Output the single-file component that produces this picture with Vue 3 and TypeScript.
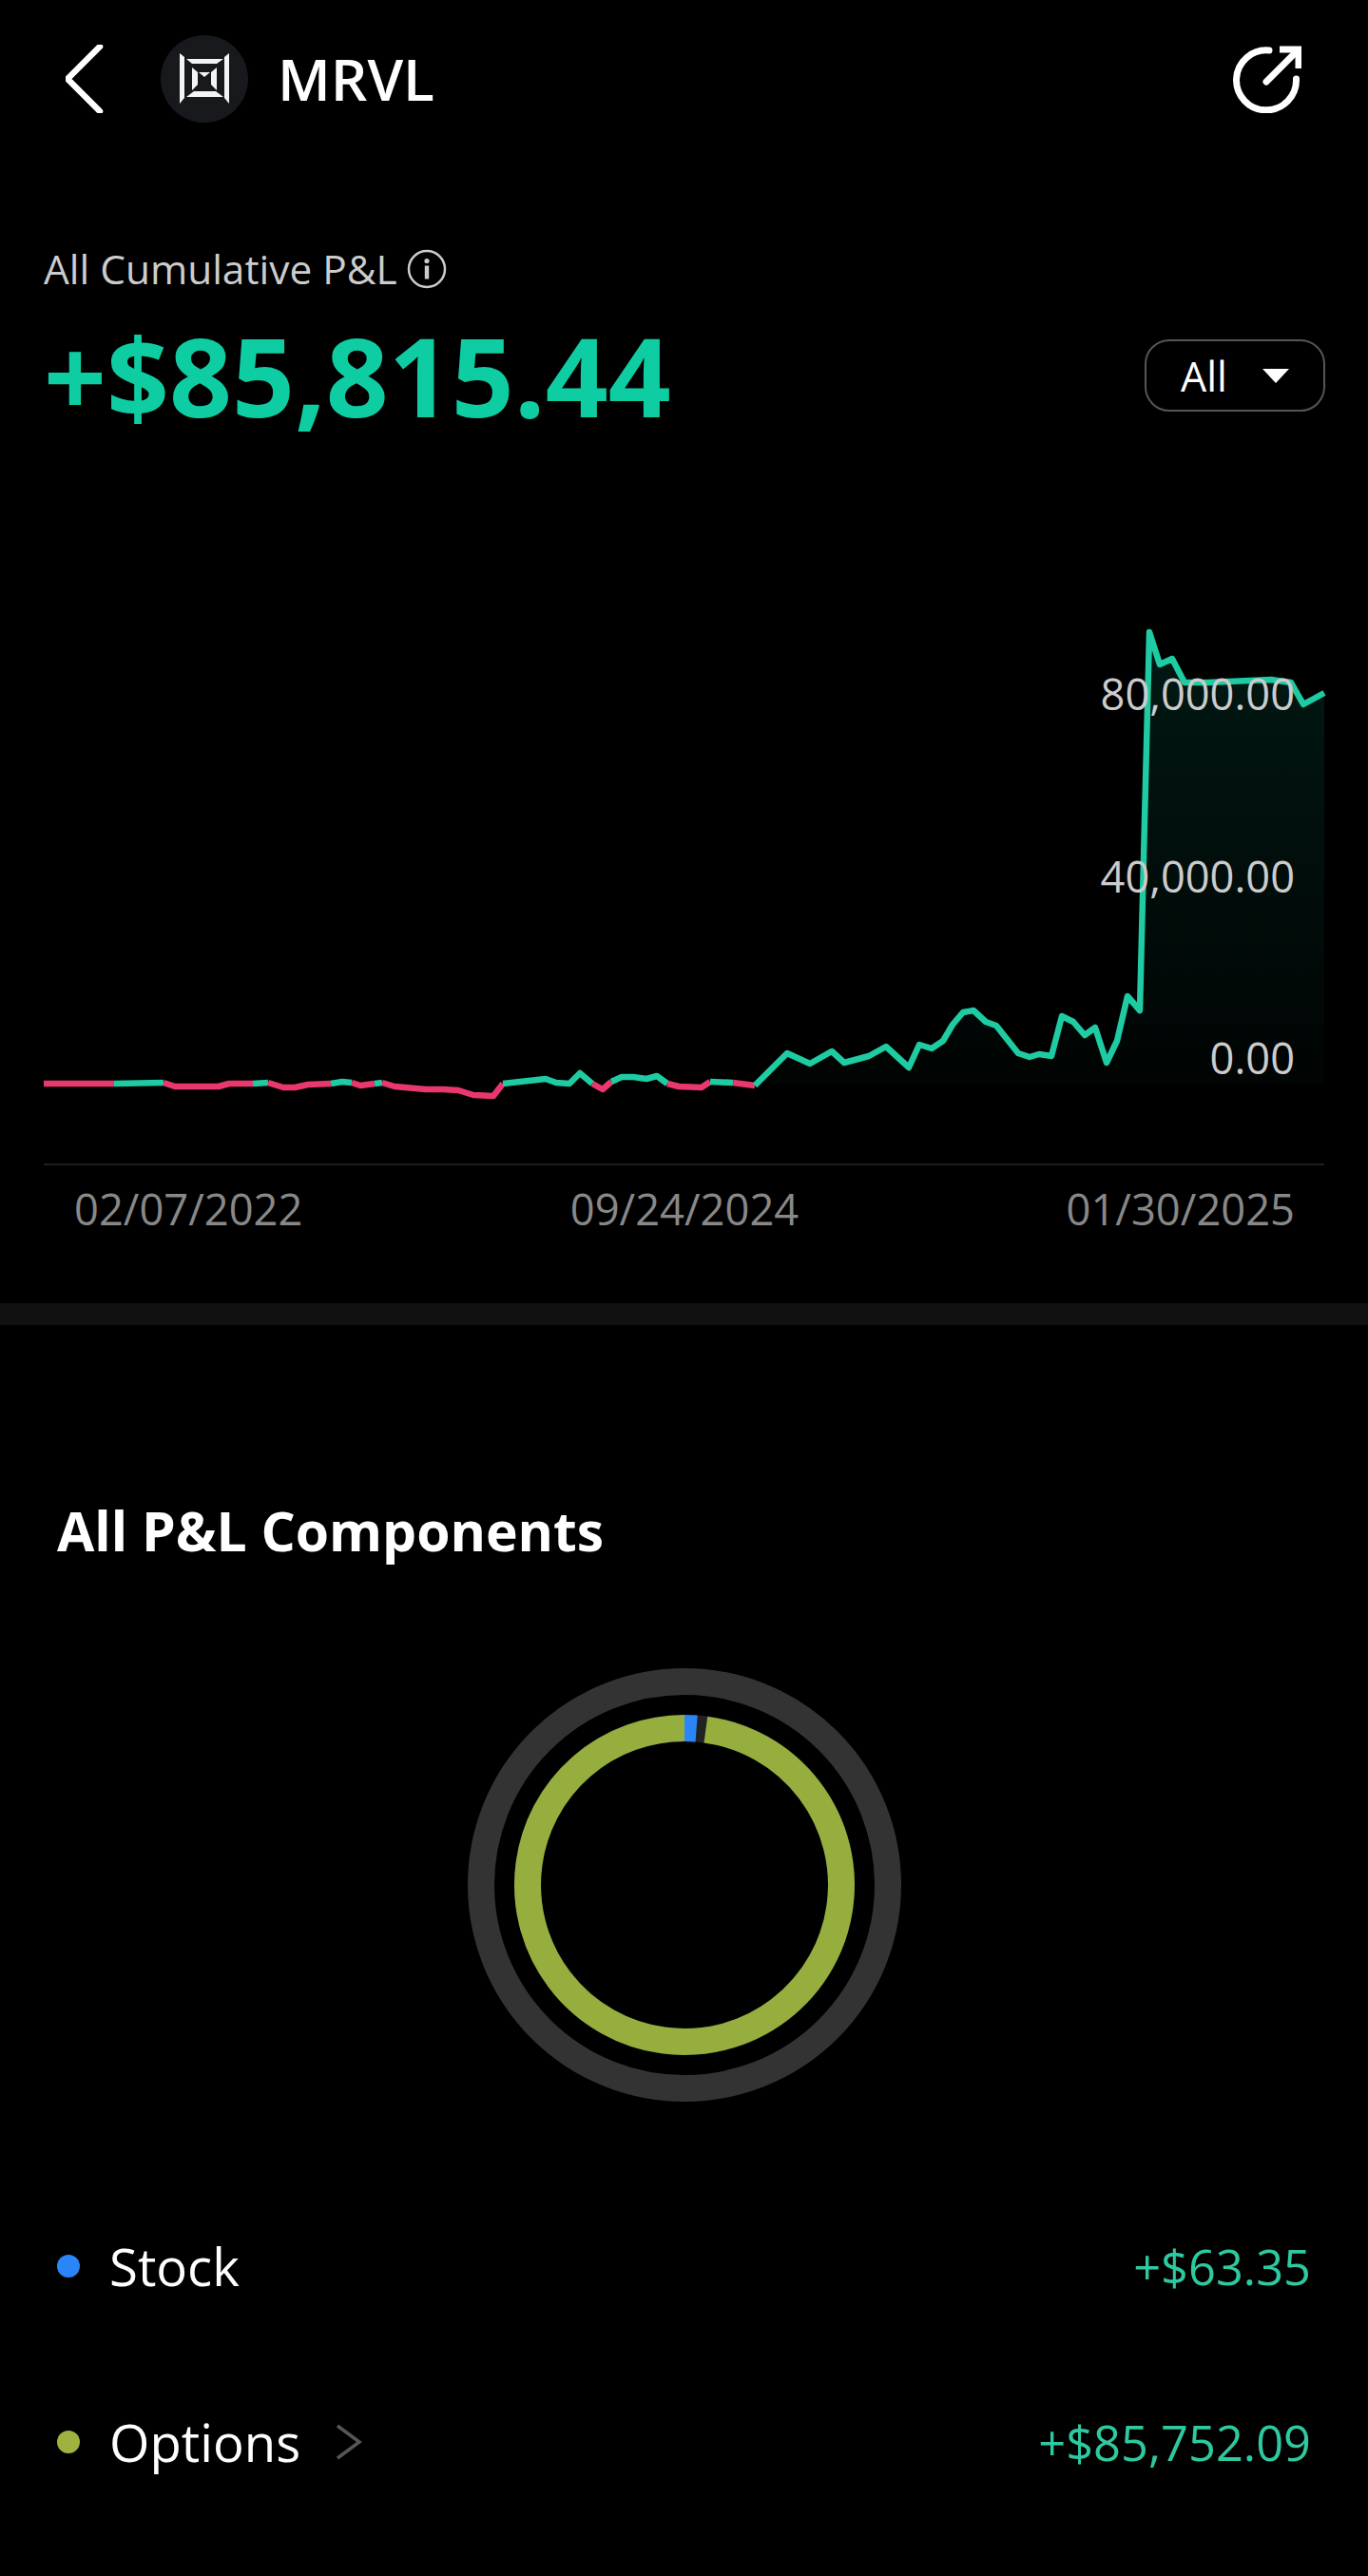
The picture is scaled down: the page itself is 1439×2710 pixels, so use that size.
<template>
  <div class="page">
    <header class="topBar">
      <div class="topLeft">
        <svg class="backIcon" width="40" height="72" viewBox="0 0 40 72">
          <path d="M36 2 L2 36 L36 70" fill="none" stroke="#fff" stroke-width="6.5" stroke-linecap="round" stroke-linejoin="round" />
        </svg>
        <div class="logo">
          <svg width="54" height="54" viewBox="0 0 54 54" fill="#f4f4f4">
            <path d="M1 0 L6 4 V47 L1 53 Z" />
            <path d="M53 0 L48 4 V47 L53 53 Z" />
            <path d="M8 6 H47 L40 11 H14 Z" />
            <path d="M8 46 H47 L39 40 H16 Z" />
            <path d="M14 15 L20 20 V33 L14 39 Z" />
            <path d="M40 15 L34 20 V33 L40 39 Z" />
            <path d="M21 20 H33 L27 25 Z" />
          </svg>
        </div>
        <span class="ticker">MRVL</span>
      </div>
      <svg class="shareIcon" width="72" height="72" viewBox="0 0 72 72">
        <path d="M38 6 A31.5 31.5 0 1 0 66.5 36" fill="none" stroke="#fff" stroke-width="7" stroke-linecap="round" />
        <path d="M35 39 L66 8" fill="none" stroke="#fff" stroke-width="7" stroke-linecap="round" />
        <path d="M49 5 H69 V25" fill="none" stroke="#fff" stroke-width="7" />
      </svg>
    </header>

    <section class="summary">
      <div class="summaryLabel">
        <span>All Cumulative P&amp;L</span>
        <svg width="42" height="42" viewBox="0 0 42 42">
          <circle cx="21" cy="21" r="19" fill="none" stroke="#ccc" stroke-width="2.5" />
          <circle cx="21" cy="12.5" r="2.6" fill="#ccc" />
          <rect x="18.8" y="17.5" width="4.4" height="14" fill="#ccc" />
        </svg>
      </div>
      <div class="summaryValue">
        <span class="bigValue">+$85,815.44</span>
        <div class="rangeButton">
          <span>All</span>
          <span class="caret"></span>
        </div>
      </div>
    </section>

    <section class="chart">
      <svg class="chartSvg" width="1439" height="640" viewBox="0 0 1439 640">
        <defs>
          <linearGradient id="areaFill" x1="0" y1="0" x2="0" y2="1">
            <stop offset="0" stop-color="#0fcda3" stop-opacity="0.12" />
            <stop offset="1" stop-color="#0fcda3" stop-opacity="0.02" />
          </linearGradient>
        </defs>
        <path :d="areaPath" fill="url(#areaFill)" />
        <polyline
          v-for="(seg, i) in segments"
          :key="i"
          :points="seg.points"
          :stroke="seg.color"
          fill="none"
          stroke-width="6.5"
          stroke-linejoin="round"
        />
      </svg>
      <span class="yLabel y80">80,000.00</span>
      <span class="yLabel y40">40,000.00</span>
      <span class="yLabel y0">0.00</span>
      <div class="dates">
        <span>02/07/2022</span>
        <span>09/24/2024</span>
        <span>01/30/2025</span>
      </div>
    </section>

    <div class="band"></div>

    <section class="components">
      <h2 class="compTitle">All P&amp;L Components</h2>
      <div class="donutWrap">
        <svg width="460" height="460" viewBox="0 0 460 460">
          <circle cx="230" cy="230" r="214" fill="none" stroke="#333" stroke-width="28" />
          <g transform="rotate(-90 230 230)" fill="none" stroke-width="28">
            <circle cx="230" cy="230" r="165" stroke="#222" />
            <circle cx="230" cy="230" r="165" stroke="#95ae3e" :stroke-dasharray="`${greenLen} 2000`" :transform="`rotate(7.8 230 230)`" />
            <circle cx="230" cy="230" r="165" stroke="#2a86f7" :stroke-dasharray="`${blueLen} 2000`" />
          </g>
        </svg>
      </div>
      <div class="legendRow">
        <div class="legendLeft">
          <i class="dot blue"></i>
          <span>Stock</span>
        </div>
        <span class="amount">+$63.35</span>
      </div>
      <div class="legendRow">
        <div class="legendLeft">
          <i class="dot olive"></i>
          <span>Options</span>
          <svg class="rowChevron" width="28" height="38" viewBox="0 0 28 38">
            <path d="M2 2 L25 19 L2 36" fill="none" stroke="#565656" stroke-width="3.5" />
          </svg>
        </div>
        <span class="amount">+$85,752.09</span>
      </div>
    </section>
  </div>
</template>

<script setup lang="ts">
import { computed } from 'vue';

const GREEN = '#1fcba2';
const RED = '#e8386d';
// top of chart svg in page coords
const TOP = 640;
const ZERO = 1140 - TOP;

type Pt = [number, number];

// each run of the line, in page coords, with its colour
const runs: { color: string; pts: Pt[] }[] = [
  { color: RED, pts: [[46, 1140], [120, 1140]] },
  { color: GREEN, pts: [[120, 1140], [172, 1139]] },
  { color: RED, pts: [[172, 1139], [184, 1143], [207, 1143], [230, 1143], [241, 1140], [266, 1140]] },
  { color: GREEN, pts: [[266, 1140], [282, 1139]] },
  { color: RED, pts: [[282, 1139], [298, 1144], [310, 1144], [324, 1141], [348, 1140]] },
  { color: GREEN, pts: [[348, 1140], [360, 1138], [370, 1139]] },
  { color: RED, pts: [[370, 1139], [379, 1142], [394, 1140]] },
  { color: GREEN, pts: [[394, 1140], [402, 1139]] },
  { color: RED, pts: [[402, 1139], [415, 1143], [448, 1146], [466, 1146], [482, 1147], [498, 1152], [519, 1153], [529, 1140]] },
  { color: GREEN, pts: [[529, 1140], [574, 1135], [585, 1139], [599, 1140], [610, 1129], [623, 1140]] },
  { color: RED, pts: [[623, 1140], [634, 1146], [643, 1138]] },
  { color: GREEN, pts: [[643, 1138], [654, 1133], [666, 1133], [680, 1135], [691, 1132], [702, 1140]] },
  { color: RED, pts: [[702, 1140], [714, 1143], [738, 1144], [747, 1138]] },
  { color: GREEN, pts: [[747, 1138], [771, 1139]] },
  { color: RED, pts: [[771, 1139], [794, 1142]] },
  {
    color: GREEN,
    pts: [
      [794, 1142], [828, 1108], [852, 1119], [875, 1106], [888, 1118], [914, 1111], [932, 1101], [956, 1123],
      [967, 1099], [980, 1103], [992, 1095], [1002, 1078], [1013, 1065], [1024, 1063], [1037, 1075], [1048, 1079],
      [1071, 1108], [1083, 1112], [1093, 1109], [1106, 1111], [1117, 1069], [1129, 1075], [1141, 1089], [1152, 1081],
      [1164, 1118], [1175, 1095], [1186, 1048], [1199, 1063], [1209, 665], [1220, 699], [1233, 693], [1246, 718],
      [1270, 718], [1337, 715], [1358, 718], [1371, 741], [1393, 729],
    ],
  },
];

const segments = computed(() =>
  runs.map((r) => ({
    color: r.color,
    points: r.pts.map(([x, y]) => `${x},${y - TOP}`).join(' '),
  })),
);

const areaPath = computed(() => {
  const green = runs[runs.length - 1].pts;
  const line = green.map(([x, y]) => `L${x} ${y - TOP}`).join(' ');
  return `M${green[0][0]} ${ZERO} ${line} L1393 ${ZERO} Z`;
});

const circ = 2 * Math.PI * 165;
const blueLen = (circ * 4.4) / 360;
const greenLen = (circ * (360 - 7.8)) / 360;
</script>

<style scoped>
.page {
  width: 1439px;
  height: 2710px;
  background: #000;
  color: #fff;
  font-family: 'Open Sans', 'Noto Sans', sans-serif;
  overflow: hidden;
}

.topBar {
  display: flex;
  align-items: center;
  justify-content: space-between;
  height: 166px;
  padding: 0 70px 0 69px;
}

.topLeft {
  display: flex;
  align-items: center;
}

.backIcon {
  display: block;
  margin-right: 60px;
}

.logo {
  width: 92px;
  height: 92px;
  border-radius: 50%;
  background: #17191d;
  display: flex;
  align-items: center;
  justify-content: center;
  margin-right: 31px;
}

.ticker {
  font-size: 60.5px;
  font-weight: 600;
  line-height: 1;
}

.shareIcon {
  display: block;
}

.summary {
  padding: 90px 45px 0 46px;
}

.summaryLabel {
  display: flex;
  align-items: center;
  gap: 10px;
  font-size: 42.4px;
  line-height: 54px;
  color: #ccc;
}

.summaryValue {
  display: flex;
  align-items: center;
  justify-content: space-between;
  margin-top: 15px;
}

.bigValue {
  font-size: 115.4px;
  font-weight: 700;
  line-height: 140px;
  color: #0fcda3;
}

.rangeButton {
  width: 190px;
  height: 76px;
  box-sizing: border-box;
  border: 2px solid #555;
  border-radius: 26px;
  display: flex;
  align-items: center;
  justify-content: flex-start;
  gap: 37px;
  padding-left: 36px;
  font-size: 43px;
}

.caret {
  width: 0;
  height: 0;
  border-left: 14px solid transparent;
  border-right: 14px solid transparent;
  border-top: 15px solid #fff;
}

.chart {
  position: relative;
  margin-top: 175px;
  height: 731px;
  box-sizing: border-box;
}

.chartSvg {
  display: block;
}

.yLabel {
  position: absolute;
  right: 77px;
  font-size: 45.2px;
  line-height: 60px;
  color: #ccc;
}

.y80 { top: 60px; }
.y40 { top: 252px; }
.y0 { top: 443px; }

.dates {
  position: absolute;
  left: 46px;
  right: 46px;
  top: 584px;
  border-top: 2px solid #1e1e1e;
  padding: 16px 31px 0 32px;
  display: flex;
  justify-content: space-between;
  font-size: 45.3px;
  line-height: 60px;
  color: #888;
}

.band {
  height: 23px;
  background: #111;
}

.components {
  padding: 0 60px 0;
}

.compTitle {
  margin: 0;
  padding-top: 178px;
  font-size: 57px;
  font-weight: 700;
  line-height: 76px;
}

.donutWrap {
  display: flex;
  justify-content: center;
  margin-top: 105px;
}

.donutWrap svg {
  display: block;
}

.legendRow {
  display: flex;
  align-items: center;
  justify-content: space-between;
  height: 184px;
  font-size: 54.5px;
}

.donutWrap + .legendRow {
  margin-top: 79px;
}

.legendRow + .legendRow {
  margin-top: 1px;
}

.legendLeft {
  display: flex;
  align-items: center;
}

.dot {
  width: 24px;
  height: 24px;
  border-radius: 50%;
  margin-right: 31px;
}

.dot.blue { background: #2a86f7; }
.dot.olive { background: #9fb23f; }

.rowChevron {
  margin-left: 37px;
}

.amount {
  font-size: 50.6px;
  color: #2ec9a0;
}
</style>

<style>
html,
body {
  background: #000;
}
</style>
